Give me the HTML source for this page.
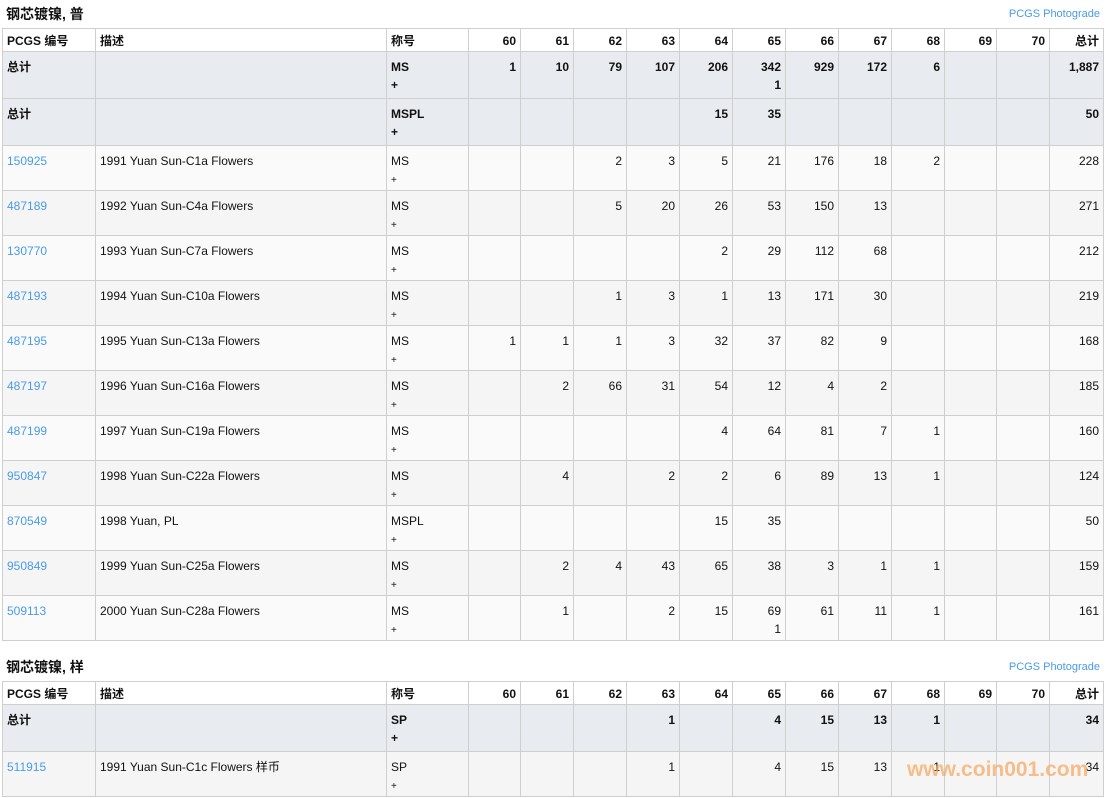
<!DOCTYPE html>
<html><head><meta charset="utf-8"><style>
body{margin:0;background:#fff;font-family:"Liberation Sans","Noto Sans CJK SC",sans-serif;font-size:12px;color:#111;width:1107px;height:798px;overflow:hidden;position:relative}
.t{position:absolute;left:6px;font-weight:bold;font-size:14px}
.pg{position:absolute;right:7px;font-size:11px;color:#4a9be8}
table{position:absolute;left:2px;border-collapse:collapse;table-layout:fixed;width:1101px}
td{border:1px solid #cfcfcf;vertical-align:top;padding:6px 4px 0 4px;line-height:18px;text-align:right}
td:nth-child(-n+3){text-align:left}
tr.h td{height:19px;padding-top:3px;font-weight:bold;background:#fff}
tr.s td{height:40px;background:#e8ecf0;font-weight:bold}
tr.d td{height:38px;background:#fafafa}
tr.d:nth-child(odd) td{background:#f5f5f5}
a{color:#4a9be8;text-decoration:none}
.p{font-size:10px;line-height:16px}
.wm{position:absolute;left:907px;top:758px;font-size:21px;font-weight:bold;color:rgba(247,165,90,0.7)}
</style></head><body>
<div class="t" style="top:4px">钢芯镀镍, 普</div>
<div class="pg" style="top:8px">PCGS Photograde</div>
<table style="top:28px">
<colgroup><col style="width:93px"><col style="width:291px"><col style="width:82px"><col style="width:52px"><col style="width:53px"><col style="width:53px"><col style="width:53px"><col style="width:53px"><col style="width:53px"><col style="width:53px"><col style="width:53px"><col style="width:53px"><col style="width:52px"><col style="width:53px"><col style="width:54px"></colgroup>
<tr class="h"><td>PCGS 编号</td><td>描述</td><td>称号</td><td>60</td><td>61</td><td>62</td><td>63</td><td>64</td><td>65</td><td>66</td><td>67</td><td>68</td><td>69</td><td>70</td><td>总计</td></tr>
<tr class="s"><td>总计</td><td></td><td>MS<br>+</td><td>1</td><td>10</td><td>79</td><td>107</td><td>206</td><td>342<br>1</td><td>929</td><td>172</td><td>6</td><td></td><td></td><td>1,887</td></tr>
<tr class="s"><td>总计</td><td></td><td>MSPL<br>+</td><td></td><td></td><td></td><td></td><td>15</td><td>35</td><td></td><td></td><td></td><td></td><td></td><td>50</td></tr>
<tr class="d"><td><a>150925</a></td><td>1991 Yuan Sun-C1a Flowers</td><td>MS<br><span class="p">+</span></td><td></td><td></td><td>2</td><td>3</td><td>5</td><td>21</td><td>176</td><td>18</td><td>2</td><td></td><td></td><td>228</td></tr>
<tr class="d"><td><a>487189</a></td><td>1992 Yuan Sun-C4a Flowers</td><td>MS<br><span class="p">+</span></td><td></td><td></td><td>5</td><td>20</td><td>26</td><td>53</td><td>150</td><td>13</td><td></td><td></td><td></td><td>271</td></tr>
<tr class="d"><td><a>130770</a></td><td>1993 Yuan Sun-C7a Flowers</td><td>MS<br><span class="p">+</span></td><td></td><td></td><td></td><td></td><td>2</td><td>29</td><td>112</td><td>68</td><td></td><td></td><td></td><td>212</td></tr>
<tr class="d"><td><a>487193</a></td><td>1994 Yuan Sun-C10a Flowers</td><td>MS<br><span class="p">+</span></td><td></td><td></td><td>1</td><td>3</td><td>1</td><td>13</td><td>171</td><td>30</td><td></td><td></td><td></td><td>219</td></tr>
<tr class="d"><td><a>487195</a></td><td>1995 Yuan Sun-C13a Flowers</td><td>MS<br><span class="p">+</span></td><td>1</td><td>1</td><td>1</td><td>3</td><td>32</td><td>37</td><td>82</td><td>9</td><td></td><td></td><td></td><td>168</td></tr>
<tr class="d"><td><a>487197</a></td><td>1996 Yuan Sun-C16a Flowers</td><td>MS<br><span class="p">+</span></td><td></td><td>2</td><td>66</td><td>31</td><td>54</td><td>12</td><td>4</td><td>2</td><td></td><td></td><td></td><td>185</td></tr>
<tr class="d"><td><a>487199</a></td><td>1997 Yuan Sun-C19a Flowers</td><td>MS<br><span class="p">+</span></td><td></td><td></td><td></td><td></td><td>4</td><td>64</td><td>81</td><td>7</td><td>1</td><td></td><td></td><td>160</td></tr>
<tr class="d"><td><a>950847</a></td><td>1998 Yuan Sun-C22a Flowers</td><td>MS<br><span class="p">+</span></td><td></td><td>4</td><td></td><td>2</td><td>2</td><td>6</td><td>89</td><td>13</td><td>1</td><td></td><td></td><td>124</td></tr>
<tr class="d"><td><a>870549</a></td><td>1998 Yuan, PL</td><td>MSPL<br><span class="p">+</span></td><td></td><td></td><td></td><td></td><td>15</td><td>35</td><td></td><td></td><td></td><td></td><td></td><td>50</td></tr>
<tr class="d"><td><a>950849</a></td><td>1999 Yuan Sun-C25a Flowers</td><td>MS<br><span class="p">+</span></td><td></td><td>2</td><td>4</td><td>43</td><td>65</td><td>38</td><td>3</td><td>1</td><td>1</td><td></td><td></td><td>159</td></tr>
<tr class="d"><td><a>509113</a></td><td>2000 Yuan Sun-C28a Flowers</td><td>MS<br><span class="p">+</span></td><td></td><td>1</td><td></td><td>2</td><td>15</td><td>69<br>1</td><td>61</td><td>11</td><td>1</td><td></td><td></td><td>161</td></tr>
</table>
<div class="t" style="top:657px">钢芯镀镍, 样</div>
<div class="pg" style="top:661px">PCGS Photograde</div>
<table style="top:681px">
<colgroup><col style="width:93px"><col style="width:291px"><col style="width:82px"><col style="width:52px"><col style="width:53px"><col style="width:53px"><col style="width:53px"><col style="width:53px"><col style="width:53px"><col style="width:53px"><col style="width:53px"><col style="width:53px"><col style="width:52px"><col style="width:53px"><col style="width:54px"></colgroup>
<tr class="h"><td>PCGS 编号</td><td>描述</td><td>称号</td><td>60</td><td>61</td><td>62</td><td>63</td><td>64</td><td>65</td><td>66</td><td>67</td><td>68</td><td>69</td><td>70</td><td>总计</td></tr>
<tr class="s"><td>总计</td><td></td><td>SP<br>+</td><td></td><td></td><td></td><td>1</td><td></td><td>4</td><td>15</td><td>13</td><td>1</td><td></td><td></td><td>34</td></tr>
<tr class="d"><td><a>511915</a></td><td>1991 Yuan Sun-C1c Flowers 样币</td><td>SP<br><span class="p">+</span></td><td></td><td></td><td></td><td>1</td><td></td><td>4</td><td>15</td><td>13</td><td>1</td><td></td><td></td><td>34</td></tr>
</table>
<div class="wm">www.coin001.com</div>
</body></html>
